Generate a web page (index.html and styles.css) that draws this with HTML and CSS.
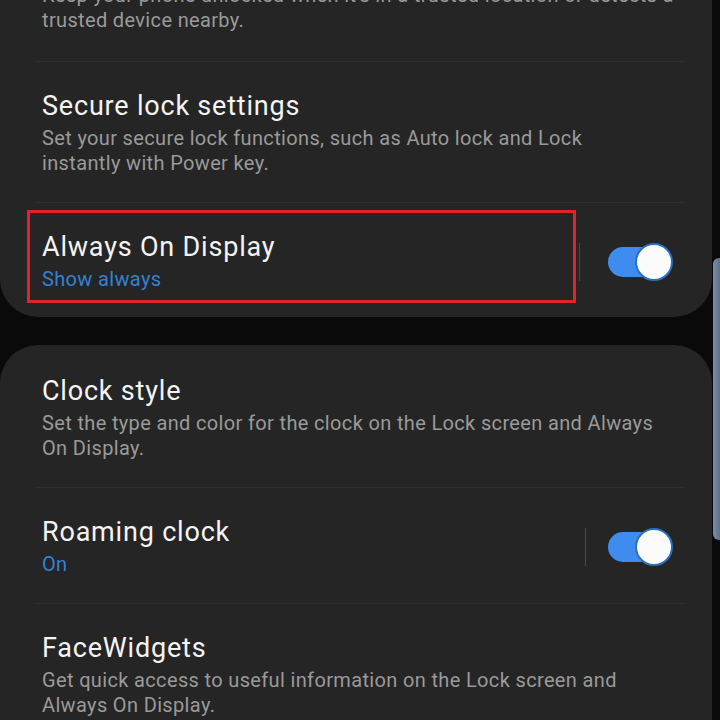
FILE: index.html
```html
<!DOCTYPE html>
<html lang="en">
<head>
<meta charset="utf-8">
<title>Lock screen</title>
<link rel="stylesheet" href="styles.css">
</head>
<body>
<main class="screen">
  <section class="card card-top">
    <div class="row row-cut">
      <div class="text">
        <p class="desc">Keep your phone unlocked when it's in a trusted location or detects a trusted device nearby.</p>
      </div>
    </div>
    <div class="row">
      <div class="text">
        <h2 class="title">Secure lock settings</h2>
        <p class="desc">Set your secure lock functions, such as Auto lock and Lock instantly with Power key.</p>
      </div>
    </div>
    <div class="row row-last">
      <div class="text">
        <h2 class="title">Always On Display</h2>
        <p class="status">Show always</p>
      </div>
      <span class="split"></span>
      <span class="switch on"><span class="knob"></span></span>
      <span class="highlight"></span>
    </div>
  </section>

  <section class="card card-bottom">
    <div class="row row-first">
      <div class="text">
        <h2 class="title">Clock style</h2>
        <p class="desc">Set the type and color for the clock on the Lock screen and Always On Display.</p>
      </div>
    </div>
    <div class="row">
      <div class="text">
        <h2 class="title">Roaming clock</h2>
        <p class="status">On</p>
      </div>
      <span class="split split-wide"></span>
      <span class="switch on"><span class="knob"></span></span>
    </div>
    <div class="row">
      <div class="text">
        <h2 class="title">FaceWidgets</h2>
        <p class="desc">Get quick access to useful information on the Lock screen and Always On Display.</p>
      </div>
    </div>
  </section>

  <span class="scroll-thumb"></span>
</main>
</body>
</html>
```
FILE: styles.css
```css
* {
  box-sizing: border-box;
}

html, body {
  margin: 0;
  padding: 0;
  background: #0a0a0a;
}

body {
  width: 720px;
  height: 720px;
  overflow: hidden;
  font-family: Roboto, "Noto Sans", sans-serif;
}

.screen {
  position: relative;
  height: 720px;
  overflow: hidden;
}

.card {
  background: #252525;
  width: 712px;
  display: flex;
  flex-direction: column;
}

.card-top {
  margin-top: -17px;
  border-radius: 0 0 38px 38px;
}

.card-bottom {
  margin-top: 28px;
  border-radius: 38px 38px 0 0;
}

/* each setting: text on the left, optional switch on the right */
.row {
  position: relative;
  display: flex;
  align-items: center;
  margin: 0 27px 0 35px;
  padding: 28px 0 26px 7px;
  border-bottom: 1px solid #2f2f2f;
}

.row:last-child {
  border-bottom: none;
}

.row-cut {
  padding-top: 0;
  padding-bottom: 28px;
}

.row-first {
  padding-top: 30px;
}

.row-last {
  padding-bottom: 25px;
}

.text {
  flex: 1;
  min-width: 0;
}

.title {
  margin: 0;
  font-size: 27px;
  line-height: 32px;
  font-weight: 400;
  letter-spacing: 0.8px;
  color: #f4f4f4;
}

.desc {
  margin: 4px 0 0;
  padding-right: 20px;
  font-size: 20px;
  line-height: 25px;
  letter-spacing: 0.35px;
  color: #9a9a9a;
}

.row-cut .desc {
  margin-top: 0;
  padding-right: 0;
}

.status {
  margin: 4px 0 0;
  font-size: 20px;
  line-height: 25px;
  letter-spacing: 0.35px;
  color: #3482d2;
}

.split {
  width: 1px;
  height: 38px;
  background: #4a4a4a;
  margin-right: 28px;
}

.split-wide {
  margin-right: 22px;
}

.switch {
  position: relative;
  width: 65px;
  height: 38px;
  margin-right: 12px;
  flex: none;
}

.switch::before {
  content: "";
  position: absolute;
  left: 0;
  top: 4px;
  width: 56px;
  height: 30px;
  border-radius: 15px;
  background: #3f8cef;
}

.knob {
  position: absolute;
  right: 0;
  top: 0;
  width: 38px;
  height: 38px;
  border-radius: 50%;
  background: #fbfbfb;
  border: 2px solid #2a6fc0;
}

/* red annotation frame around the Always On Display label */
.highlight {
  position: absolute;
  left: -8px;
  top: 7px;
  width: 549px;
  height: 93px;
  border: 3px solid #e3232c;
}

.scroll-thumb {
  position: absolute;
  right: 0;
  top: 258px;
  width: 7px;
  height: 282px;
  border-radius: 6px 0 0 6px;
  background: linear-gradient(to right, #7c8ea6, #5d7089);
}
```
